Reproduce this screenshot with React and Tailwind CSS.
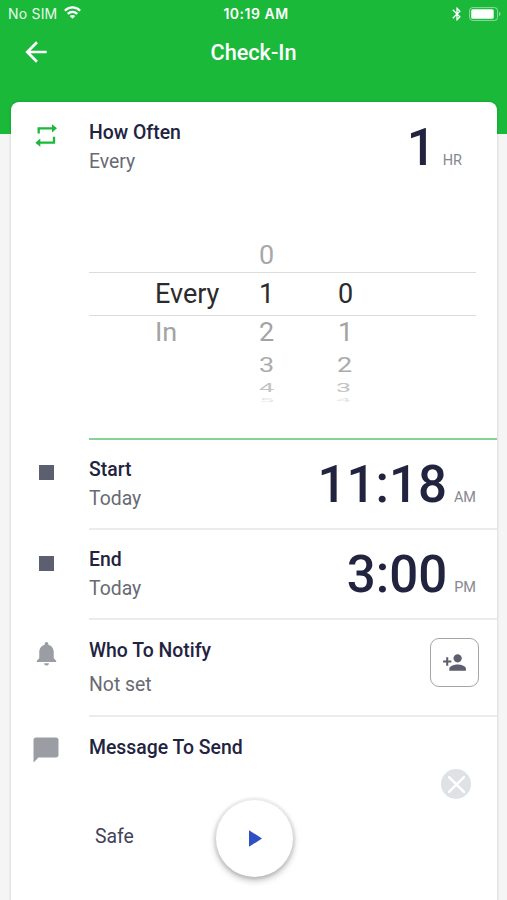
import React from 'react';
import { MdArrowBack, MdBluetooth, MdChatBubble, MdNotifications, MdPersonAdd } from 'react-icons/md';

// Wheel rows below the selected one get flatter and lighter
const wheelRows = [
  { unit: '', tens: '0', ones: '', row: 'h-[37px] pt-[5px]', text: 'text-[#a8a8a8] scale-y-[0.93]', shift: '' },
  { unit: 'Every', tens: '1', ones: '0', row: 'h-[44px] border-y border-[#dcdcdc]', text: 'text-[#2b2b2b]', shift: '' },
  { unit: 'In', tens: '2', ones: '1', row: 'h-[32px] pt-0.5', text: 'text-[#a3a3a3] scale-y-[0.93]', shift: '' },
  { unit: '', tens: '3', ones: '2', row: 'h-[34px]', text: 'text-[#ababab] scale-y-[0.74]', shift: '-ml-px' },
  { unit: '', tens: '4', ones: '3', row: 'h-[13px]', text: 'text-[#c4c4c4] scale-y-[0.46]', shift: '-ml-0.5' },
  { unit: '', tens: '5', ones: '4', row: 'h-[11px]', text: 'text-[#e6e6e6] scale-y-[0.17]', shift: '-ml-0.5' },
];

function StatusBar() {
  return (
    <div className="h-[27px] pl-2 pr-1.5 grid grid-cols-[1fr_80px_1fr] items-center text-white font-[Inter,sans-serif] text-[14px]">
      <div className="flex items-center gap-[7px]">
        <span className="tracking-[0.2px] opacity-90">No SIM</span>
        <svg className="w-[17px] h-[13px] -mt-0.5" viewBox="0 0 17 13" fill="none" stroke="currentColor" strokeWidth="2.300">
          <path d="M0.900 4.700C5 0.300 12 0.300 16.100 4.700" />
          <path d="M3.800 7.900c2.700-2.800 6.700-2.800 9.400 0" />
          <path d="M8.500 12.800 5.700 10c1.500-1.500 4.100-1.500 5.600 0z" fill="currentColor" stroke="none" />
        </svg>
      </div>
      <div className="pl-[3px] text-center font-semibold text-[14px] tracking-[0.5px] whitespace-nowrap">10:19 AM</div>
      <div className="flex items-center justify-end gap-1">
        <MdBluetooth className="w-[16px] h-[16px]" />
        <svg className="w-[32px] h-[14px]" viewBox="0 0 32 14" fill="none">
          <rect x="0.600" y="0.600" width="28" height="12.800" rx="3" stroke="white" strokeOpacity="0.500" />
          <rect x="2.200" y="2.200" width="22.500" height="9.600" rx="1.500" fill="white" />
          <path d="M30 5c2 .7 2 3.300 0 4z" fill="white" fillOpacity="0.500" />
        </svg>
      </div>
    </div>
  );
}

function RepeatIcon() {
  return (
    <svg className="mt-[3px] w-[22px] h-[23px] text-[#1ab93a]" viewBox="0 0 22 23" fill="none" stroke="currentColor" strokeWidth="2.300">
      <path d="M3.700 9.500V4.300H17.500M19 12.700v6H4.500" />
      <path d="M17 0.200l5 4.100-5 4.200zM5.300 14.500l-5 4.200 5 4.100z" fill="currentColor" stroke="none" />
    </svg>
  );
}

function Row({ icon, title, subtitle, className, bodyClassName, children }) {
  return (
    <div className={`flex ${className}`}>
      <div className="w-[70px] mr-2 shrink-0 flex justify-center items-start">{icon}</div>
      <div className={`flex-1 flex justify-between ${bodyClassName}`}>
        <div className="flex flex-col">
          <h2 className="text-[19.4px] leading-6 font-medium text-[#22233f]">{title}</h2>
          {subtitle}
        </div>
        {children}
      </div>
    </div>
  );
}

function Time({ value, suffix }) {
  return (
    <div className="flex items-baseline pr-[21px] h-[60px]">
      <span className="text-[51px] leading-[60px] font-medium text-[#22233f]">{value}</span>
      <span className="ml-[7px] text-[14.5px] text-[#85888f]">{suffix}</span>
    </div>
  );
}

export default function App() {
  return (
    <div className="w-[507px] h-[900px] overflow-hidden bg-[#f5f5f5] font-[Roboto,sans-serif]">
      <header className="h-[134px] bg-[#1ab93a]">
        <StatusBar />
        <div className="h-[50px] px-[20px] grid grid-cols-[32px_1fr_32px] items-center text-white">
          <button className="cursor-pointer">
            <MdArrowBack className="w-8 h-8" />
          </button>
          <h1 className="pt-0.5 text-center text-[21.7px] font-medium">Check-In</h1>
        </div>
      </header>

      <main className="relative -mt-8 ml-[11px] mr-[10px] h-[820px] bg-white rounded-t-lg shadow-[0_0_3px_rgba(0,0,0,0.2)]">
        {/* Interval */}
        <Row
          className="h-[133px] pt-[19px]"
          bodyClassName=""
          icon={<RepeatIcon />}
          title="How Often"
          subtitle={<p className="mt-[5px] text-[19.4px] leading-6 text-[#686a73]">Every</p>}
        >
          <div className="-mt-[3px] pr-[14px]">
            <Time value="1" suffix="HR" />
          </div>
        </Row>

        {/* Wheel picker */}
        <div className="ml-[78px] h-[205px] border-b-2 border-[#85d299]">
          <div className="mr-[21px] text-[27px]">
            {wheelRows.map((r) => (
              <div key={r.tens} className={`flex items-center leading-none ${r.row}`}>
                <span className={`w-[104px] ml-[66px] ${r.text}`}>{r.unit}</span>
                <span className={`w-[79px] ${r.text}`}>{r.tens}</span>
                <span className={`${r.shift} ${r.text}`}>{r.ones}</span>
              </div>
            ))}
          </div>
        </div>

        <Row
          className="h-[90px]"
          bodyClassName="pt-[18px] border-b-2 border-[#ebebeb]"
          icon={<span className="mt-[25px] w-[15px] h-[15px] bg-[#5c5f70]" />}
          title="Start"
          subtitle={<p className="mt-[5px] text-[19.4px] leading-6 text-[#686a73]">Today</p>}
        >
          <div className="-mt-[3px]">
            <Time value="11:18" suffix="AM" />
          </div>
        </Row>

        <Row
          className="h-[90px]"
          bodyClassName="pt-[18px] border-b-2 border-[#ebebeb]"
          icon={<span className="mt-[26px] w-[15px] h-[15px] bg-[#5c5f70]" />}
          title="End"
          subtitle={<p className="mt-[5px] text-[19.4px] leading-6 text-[#686a73]">Today</p>}
        >
          <div className="-mt-[3px]">
            <Time value="3:00" suffix="PM" />
          </div>
        </Row>

        <Row
          className="h-[97px]"
          bodyClassName="pt-[19px] border-b-2 border-[#ebebeb]"
          icon={<MdNotifications className="mt-[19px] w-[29px] h-[29px] text-[#9b9da5]" />}
          title="Who To Notify"
          subtitle={<p className="mt-[10px] text-[19.4px] leading-6 text-[#686a73]">Not set</p>}
        >
          <button className="-mt-px mr-[18px] w-[49px] h-[49px] rounded-[9px] border border-[#a5a5a8] flex items-center justify-center text-[#5c5f70] cursor-pointer">
            <MdPersonAdd className="w-[25px] h-[25px]" />
          </button>
        </Row>

        <Row
          className="h-[184px]"
          bodyClassName="pt-[19px]"
          icon={<MdChatBubble className="mt-[18px] w-[30px] h-[30px] text-[#9b9da5]" />}
          title="Message To Send"
          subtitle={<p className="mt-[65px] ml-1.5 text-[19.4px] leading-6 text-[#41435a]">Safe</p>}
        >
          <button className="mt-[33px] mr-[26px] w-[30px] h-[30px] rounded-full bg-[#dfe2e4] flex items-center justify-center cursor-pointer">
            <svg className="w-[17px] h-[17px]" viewBox="0 0 16 16" stroke="white" strokeWidth="2.200" strokeLinecap="round">
              <path d="M1 1l14 14M15 1L1 15" />
            </svg>
          </button>
        </Row>

        {/* Floating start button */}
        <button className="absolute left-[205px] top-[698px] w-[77px] h-[77px] rounded-full bg-white shadow-[0_0_0_3px_rgba(0,0,0,0.035),0_3px_7px_rgba(0,0,0,0.3)] flex items-center justify-center cursor-pointer">
          <svg className="w-[13px] h-[17px] ml-0.5" viewBox="0 0 14 18" fill="#2f4fc4">
            <path d="M0 0l14 9L0 18z" />
          </svg>
        </button>
      </main>
    </div>
  );
}
